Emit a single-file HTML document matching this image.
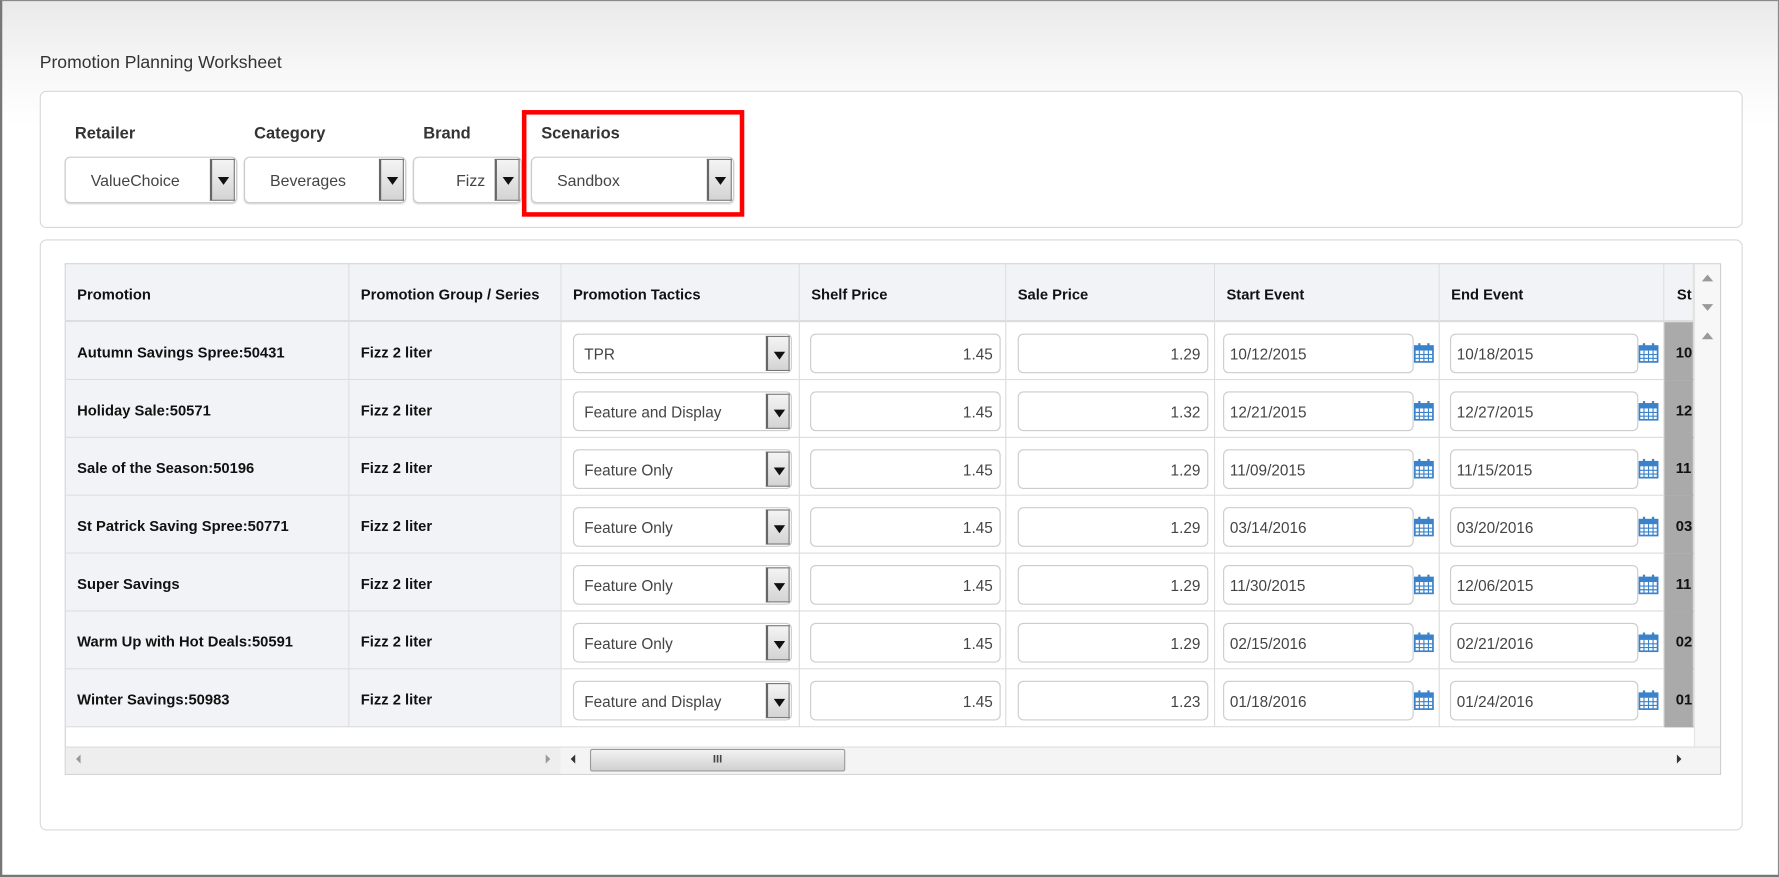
<!DOCTYPE html>
<html><head><meta charset="utf-8"><style>
*{box-sizing:border-box;margin:0;padding:0}
html,body{width:1779px;height:877px;overflow:hidden;background:#fff}
#w{position:absolute;left:0;top:0;width:1568px;height:773px;transform:scale(1.13457);transform-origin:0 0;font-family:"Liberation Sans",Arial,sans-serif;color:#222;
background:linear-gradient(#e9e9e9 0,#f7f7f7 60px,#fff 110px)}
#bd{position:absolute;left:0;top:0;width:1568px;height:773px;border:1px solid #8a8a8a;border-left:2px solid #777;border-bottom:2px solid #777;pointer-events:none}
.a{position:absolute}
.panel{position:absolute;background:#fff;border:1px solid #d8d8d8;border-radius:6px}
.lbl{position:absolute;top:110px;font-size:14.5px;font-weight:bold;color:#333}
.sel{position:absolute;top:138px;height:41px;border:1px solid #ccc;border-radius:5px;background:#fff;font-size:14px;color:#444;padding:12px 0 0 22px;box-shadow:0 1px 1px #ddd}
.btn{position:absolute;top:1px;right:1px;width:22px;bottom:1px;background:linear-gradient(#f4f4f4,#d4d4d4);border:1px solid #777;border-left:2px solid #666}
.btn:after{content:"";position:absolute;left:5px;top:15px;border-left:5px solid transparent;border-right:5px solid transparent;border-top:7px solid #111}
.cell{position:absolute;border-right:1px solid #ddd;border-bottom:1px solid #ddd;font-size:13px;font-weight:bold;color:#111}
.hd{background:#f2f3f7;padding-top:19px;padding-left:10px}
.fz{background:#f2f3f7;padding-top:19px;padding-left:10px}
.inp{position:absolute;height:35px;border:1px solid #ccc;border-radius:5px;background:#fff;font-size:13.5px;color:#444;font-weight:normal;padding-top:10px}
.r{text-align:right;padding-right:6px}
.l{padding-left:5px}
.tbtn{position:absolute;right:1px;top:1px;bottom:1px;width:21px;background:linear-gradient(#f4f4f4,#d4d4d4);border:1px solid #777;border-left:2px solid #666}
.tbtn:after{content:"";position:absolute;left:5px;top:13px;border-left:5px solid transparent;border-right:5px solid transparent;border-top:7px solid #111}
.cal{position:absolute;width:18px;height:18px}
</style></head><body><div id="w">
<div class="a" style="left:35px;top:47px;font-size:15.5px;color:#333">Promotion Planning Worksheet</div>
<div class="panel" style="left:35px;top:80px;width:1501px;height:121px"></div>
<div class="lbl" style="left:66px">Retailer</div>
<div class="lbl" style="left:224px">Category</div>
<div class="lbl" style="left:373px">Brand</div>
<div class="lbl" style="left:477px">Scenarios</div>
<div class="sel" style="left:57px;width:152px">ValueChoice<div class="btn"></div></div>
<div class="sel" style="left:215px;width:143px">Beverages<div class="btn"></div></div>
<div class="sel" style="left:364px;width:96px;padding-left:37px">Fizz<div class="btn"></div></div>
<div class="sel" style="left:468px;width:179px">Sandbox<div class="btn"></div></div>
<div class="a" style="left:460px;top:97px;width:196px;height:94px;border:4px solid #f00"></div>
<div class="panel" style="left:35px;top:211px;width:1501px;height:521px"></div>
<div class="a" style="left:57px;top:232px;width:1460px;height:451px;border:1px solid #d0d0d0;background:#fff"></div>
<div class="cell hd" style="left:58px;top:233px;width:250px;height:51px;border-bottom:2px solid #ddd">Promotion</div>
<div class="cell hd" style="left:308px;top:233px;width:187px;height:51px;border-bottom:2px solid #ddd">Promotion Group / Series</div>
<div class="cell hd" style="left:495px;top:233px;width:210px;height:51px;border-bottom:2px solid #ddd">Promotion Tactics</div>
<div class="cell hd" style="left:705px;top:233px;width:182px;height:51px;border-bottom:2px solid #ddd">Shelf Price</div>
<div class="cell hd" style="left:887px;top:233px;width:184px;height:51px;border-bottom:2px solid #ddd">Sale Price</div>
<div class="cell hd" style="left:1071px;top:233px;width:198px;height:51px;border-bottom:2px solid #ddd">Start Event</div>
<div class="cell hd" style="left:1269px;top:233px;width:198px;height:51px;border-bottom:2px solid #ddd">End Event</div>
<div class="cell hd" style="left:1467px;top:233px;width:26px;height:51px;border-bottom:2px solid #ddd;overflow:hidden;padding-left:11px">St</div>
<div class="a" style="left:1493px;top:233px;width:23px;height:425px;background:#f7f7f7;border-left:1px solid #e4e4e4"></div>
<div class="a" style="left:1500px;top:242px;border-left:5px solid transparent;border-right:5px solid transparent;border-bottom:6px solid #999"></div>
<div class="a" style="left:1500px;top:268px;border-left:5px solid transparent;border-right:5px solid transparent;border-top:6px solid #999"></div>
<div class="a" style="left:1500px;top:293px;border-left:5px solid transparent;border-right:5px solid transparent;border-bottom:6px solid #999"></div>
<div id="rows"></div>
<div class="a" style="left:58px;top:658px;width:1458px;height:24px;background:#eee;border-top:1px solid #ddd"></div>
<div class="a" style="left:494px;top:659px;width:1022px;height:23px;background:#f4f4f4"></div>
<div class="a" style="left:67px;top:665px;border-top:4px solid transparent;border-bottom:4px solid transparent;border-right:4px solid #999"></div>
<div class="a" style="left:481px;top:665px;border-top:4px solid transparent;border-bottom:4px solid transparent;border-left:4px solid #999"></div>
<div class="a" style="left:503px;top:665px;border-top:4px solid transparent;border-bottom:4px solid transparent;border-right:4px solid #333"></div>
<div class="a" style="left:1478px;top:665px;border-top:4px solid transparent;border-bottom:4px solid transparent;border-left:4px solid #333"></div>
<div class="a" style="left:520px;top:660px;width:225px;height:20px;border:1px solid #999;border-radius:2px;background:linear-gradient(#f2f2f2,#d0d0d0);font-size:10px;text-align:center;color:#444;line-height:17px;font-weight:bold">III</div>
<div id="bd"></div>
</div>
<script>
var d=[["Autumn Savings Spree:50431","TPR","1.29","10/12/2015","10/18/2015","10"],
["Holiday Sale:50571","Feature and Display","1.32","12/21/2015","12/27/2015","12"],
["Sale of the Season:50196","Feature Only","1.29","11/09/2015","11/15/2015","11"],
["St Patrick Saving Spree:50771","Feature Only","1.29","03/14/2016","03/20/2016","03"],
["Super Savings","Feature Only","1.29","11/30/2015","12/06/2015","11"],
["Warm Up with Hot Deals:50591","Feature Only","1.29","02/15/2016","02/21/2016","02"],
["Winter Savings:50983","Feature and Display","1.23","01/18/2016","01/24/2016","01"]];
var cal='<svg viewBox="0 0 18 18" width="18" height="18"><rect x="1" y="3" width="16" height="14" fill="#fff" stroke="#3a82c9" stroke-width="1.5"/><rect x="1" y="3" width="16" height="4" fill="#3a82c9"/><rect x="4" y="0.5" width="2" height="4" fill="#3a82c9"/><rect x="12" y="0.5" width="2" height="4" fill="#3a82c9"/><path d="M5 7v10M9 7v10M13 7v10M1 10.5h16M1 13.8h16" stroke="#3a82c9" stroke-width="1"/></svg>';
var h='';
d.forEach(function(r,i){var y=284+i*51;
h+='<div class="cell fz" style="left:58px;top:'+y+'px;width:250px;height:51px">'+r[0]+'</div>';
h+='<div class="cell fz" style="left:308px;top:'+y+'px;width:187px;height:51px">Fizz 2 liter</div>';
h+='<div class="cell" style="left:495px;top:'+y+'px;width:210px;height:51px"></div>';
h+='<div class="cell" style="left:705px;top:'+y+'px;width:182px;height:51px"></div>';
h+='<div class="cell" style="left:887px;top:'+y+'px;width:184px;height:51px"></div>';
h+='<div class="cell" style="left:1071px;top:'+y+'px;width:198px;height:51px"></div>';
h+='<div class="cell" style="left:1269px;top:'+y+'px;width:198px;height:51px"></div>';
h+='<div class="cell" style="left:1467px;top:'+y+'px;width:26px;height:51px;background:#aaa;border-bottom-color:#aaa;padding:19px 0 0 10px;overflow:hidden;font-weight:bold">'+r[5]+'</div>';
h+='<div class="inp l" style="left:505px;top:'+(y+10)+'px;width:193px;padding-left:9px">'+r[1]+'<div class="tbtn"></div></div>';
h+='<div class="inp r" style="left:714px;top:'+(y+10)+'px;width:168px">1.45</div>';
h+='<div class="inp r" style="left:897px;top:'+(y+10)+'px;width:168px">'+r[2]+'</div>';
h+='<div class="inp l" style="left:1078px;top:'+(y+10)+'px;width:168px">'+r[3]+'</div>';
h+='<div class="cal" style="left:1246px;top:'+(y+18)+'px">'+cal+'</div>';
h+='<div class="inp l" style="left:1278px;top:'+(y+10)+'px;width:166px">'+r[4]+'</div>';
h+='<div class="cal" style="left:1444px;top:'+(y+18)+'px">'+cal+'</div>';
});
document.getElementById('rows').outerHTML=h;
</script>
</body></html>
